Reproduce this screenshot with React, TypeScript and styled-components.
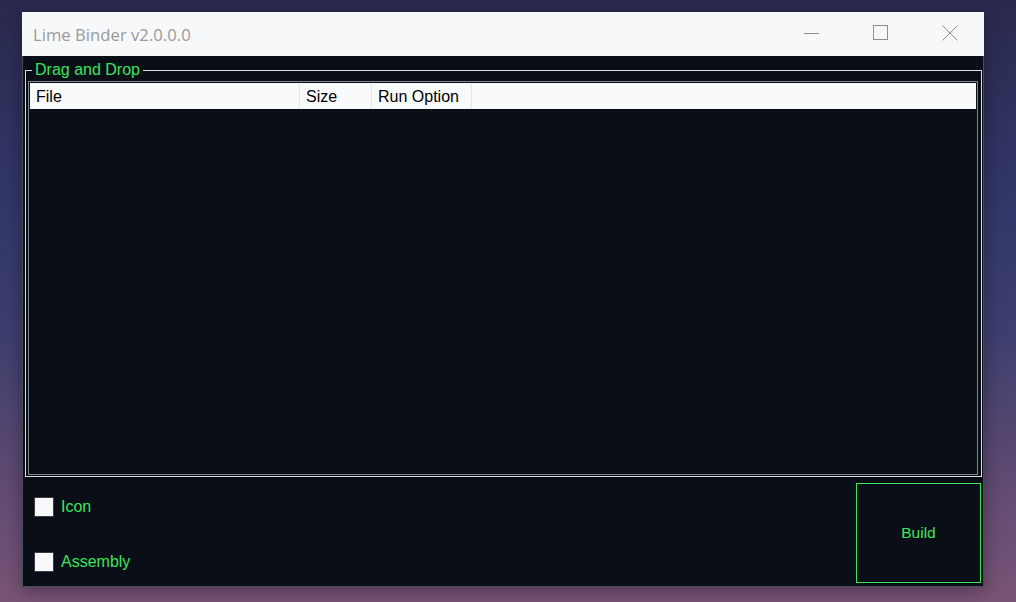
import styled, {createGlobalStyle} from "styled-components";

const GlobalStyle = createGlobalStyle`
    html, body {
        margin: 0;
        padding: 0;
        width: 1016px;
        height: 602px;
        overflow: hidden;
    }
    body {
        background: linear-gradient(180deg, #2a2a4f 0%, #33386a 35%, #3d3f6f 55%, #5d4a72 78%, #7a5478 100%);
        font-family: "Liberation Sans", Arial, sans-serif;
    }
`

type Column = {
    title: string;
    width: number;
}

const columns: Column[] = [
    {title: "File", width: 270},
    {title: "Size", width: 72},
    {title: "Run Option", width: 100},
];

const GREEN = "#3ee35d";

export default function App() {
    return (
        <>
            <GlobalStyle/>
            <Desktop>
                <Window>
                    <TitleBar>
                        <Title>Lime Binder v2.0.0.0</Title>
                        <Controls>
                            <CaptionButton aria-label="Minimize">
                                <svg width="16" height="16" viewBox="0 0 16 16">
                                    <line x1="0" y1="8.5" x2="15" y2="8.5" stroke="#8f8f8f" strokeWidth="1"/>
                                </svg>
                            </CaptionButton>
                            <CaptionButton aria-label="Maximize">
                                <svg width="16" height="16" viewBox="0 0 16 16">
                                    <rect x="0.5" y="0.5" width="14" height="14" fill="none" stroke="#8f8f8f" strokeWidth="1"/>
                                </svg>
                            </CaptionButton>
                            <CaptionButton aria-label="Close">
                                <svg width="16" height="16" viewBox="0 0 16 16">
                                    <path d="M0.5 0.5 L15.5 15.5 M15.5 0.5 L0.5 15.5" stroke="#8f8f8f" strokeWidth="1"/>
                                </svg>
                            </CaptionButton>
                        </Controls>
                    </TitleBar>
                    <Body>
                        <GroupBox>
                            <Legend>Drag and Drop</Legend>
                            <ListView>
                                <Header>
                                    {columns.map(c => (
                                        <HeaderCell key={c.title} $width={c.width}>{c.title}</HeaderCell>
                                    ))}
                                    <HeaderFiller/>
                                </Header>
                            </ListView>
                        </GroupBox>
                        <Footer>
                            <Options>
                                <CheckRow>
                                    <CheckBox/>
                                    <CheckLabel>Icon</CheckLabel>
                                </CheckRow>
                                <CheckRow>
                                    <CheckBox/>
                                    <CheckLabel>Assembly</CheckLabel>
                                </CheckRow>
                            </Options>
                            <BuildButton>Build</BuildButton>
                        </Footer>
                    </Body>
                </Window>
            </Desktop>
        </>
    );
}

const Desktop = styled.div`
    width: 1016px;
    height: 602px;
    padding: 12px 0 0 22px;
    box-sizing: border-box;
`

const Window = styled.div`
    width: 962px;
    height: 575px;
    box-sizing: border-box;
    display: flex;
    flex-direction: column;
    border: 1px solid #4a4d58;
    border-top: none;
    box-shadow: 0 4px 18px rgba(0, 0, 0, 0.35);
    background: #0a0f17;
`

const TitleBar = styled.div`
    height: 44px;
    flex-shrink: 0;
    display: flex;
    align-items: center;
    justify-content: space-between;
    background: #f7f8fa;
    margin: 0 -1px;
`

const Title = styled.span`
    padding-left: 11px;
    font-family: "Open Sans", "Noto Sans", sans-serif;
    font-size: 16.7px;
    color: #9a9a9a;
`

const Controls = styled.div`
    display: flex;
    height: 100%;
`

const CaptionButton = styled.div`
    width: 69px;
    height: 100%;
    display: flex;
    align-items: center;
    justify-content: center;
    padding-bottom: 2px;
    box-sizing: border-box;
`

const Body = styled.div`
    flex: 1;
    display: flex;
    flex-direction: column;
    padding: 0 1px 3px 2px;
`

const GroupBox = styled.fieldset`
    margin: 5px 0 0 0;
    padding: 2px 3px 1px 2px;
    border: 1px solid #dadde2;
    min-width: 0;
`

const Legend = styled.legend`
    margin-left: 4px;
    padding: 0 3px 0 3px;
    font-size: 16px;
    line-height: 18px;
    color: ${GREEN};
`

const ListView = styled.div`
    height: 394px;
    box-sizing: border-box;
    border: 1px solid #7f868f;
    padding: 1px;
    background: #0a0f17;
`

const Header = styled.div`
    height: 26px;
    display: flex;
    background: #f9fafb;
`

const HeaderCell = styled.div<{ $width: number }>`
    width: ${p => p.$width}px;
    flex-shrink: 0;
    box-sizing: border-box;
    border-right: 1px solid #e3e5e8;
    padding-left: 6px;
    padding-top: 1px;
    display: flex;
    align-items: center;
    font-size: 16px;
    color: #000;
`

const HeaderFiller = styled.div`
    flex: 1;
`

const Footer = styled.div`
    flex: 1;
    display: flex;
    justify-content: space-between;
`

const Options = styled.div`
    display: flex;
    flex-direction: column;
    gap: 35px;
    padding: 20px 0 0 9px;
`

const CheckRow = styled.div`
    display: flex;
    align-items: center;
    gap: 7px;
    height: 20px;
`

const CheckBox = styled.div`
    width: 18px;
    height: 18px;
    background: #f9f9f9;
    border: 1px solid #3a3c40;
`

const CheckLabel = styled.span`
    font-size: 16px;
    color: ${GREEN};
`

const BuildButton = styled.div`
    width: 125px;
    height: 100px;
    margin-top: 6px;
    box-sizing: border-box;
    border: 1px solid ${GREEN};
    display: flex;
    align-items: center;
    justify-content: center;
    font-size: 15.5px;
    color: ${GREEN};
    margin-right: 1px;
`
